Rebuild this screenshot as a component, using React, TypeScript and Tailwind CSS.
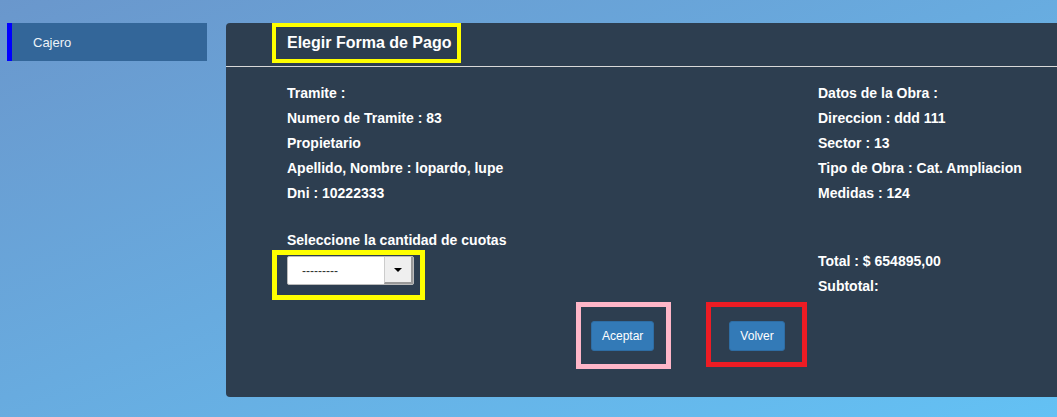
import React from "react";

const rowsLeft = [
  "Tramite :",
  "Numero de Tramite : 83",
  "Propietario",
  "Apellido, Nombre : lopardo, lupe",
  "Dni : 10222333",
];

const rowsRight = [
  "Datos de la Obra :",
  "Direccion : ddd 111",
  "Sector : 13",
  "Tipo de Obra : Cat. Ampliacion",
  "Medidas : 124",
];

export default function App() {
  return (
    <div
      className="h-[417px] w-full overflow-hidden bg-gradient-to-br from-[#6a97cc] to-[#63c1f4]"
      style={{ fontFamily: '"Liberation Sans", Arial, sans-serif' }}
    >
      <div className="flex items-start pt-[23px] pl-[7px] gap-[19px]">
        {/* sidebar */}
        <div className="w-[200px] h-[38px] shrink-0 flex items-center bg-[#336699] border-l-[5px] border-[#0000ff] pl-[21px] pt-[1px] text-[13px] text-[#eef3f8]">
          Cajero
        </div>

        {/* panel */}
        <div className="flex-1 h-[374px] bg-[#2d3e50] rounded-tl-[4px] rounded-bl-[4px] text-white">
          <div className="h-[44px] pl-[46px] border-b border-[#d8d8d8]">
            <div className="inline-flex items-center h-[40px] border-[4px] border-[#ffff00] pl-[11px] pr-[6px] text-[16px] font-bold">
              Elegir Forma de Pago
            </div>
          </div>

          <div className="grid grid-cols-[531px_1fr] pl-[61px] pt-[14px] text-[14px] font-bold">
            <div>
              {rowsLeft.map((r) => (
                <div key={r} className="leading-[25px]">
                  {r}
                </div>
              ))}
              <div className="mt-[24px] leading-[20px]">Seleccione la cantidad de cuotas</div>
              <div className="-ml-[15px] inline-block border-[5px] border-[#ffff00] pl-[10px] pr-[6px] pt-[1px] pb-[10px]">
                <div className="flex w-[127px] h-[29px] bg-white border border-[#bbb] rounded-[2px] font-normal">
                  <div className="flex-1 flex items-center pl-[14px] text-[12px] text-[#333]">---------</div>
                  <div className="w-[29px] flex items-center justify-center bg-[#efefef] border-l border-[#ccc] border-r-2 border-b-2 border-r-[#999] border-b-[#999]">
                    <div className="w-0 h-0 border-l-[4px] border-r-[4px] border-t-[4px] border-l-transparent border-r-transparent border-t-black" />
                  </div>
                </div>
              </div>
            </div>
            <div>
              {rowsRight.map((r) => (
                <div key={r} className="leading-[25px]">
                  {r}
                </div>
              ))}
              <div className="mt-[43px] leading-[25px]">Total : $ 654895,00</div>
              <div className="leading-[25px]">Subtotal:</div>
            </div>
          </div>

          <div className="flex items-start pl-[350px] mt-[2px] gap-[35px] text-[12px]">
            <div className="border-[5px] border-[#ffb6c8] pl-[10px] pr-[12px] pt-[14px] pb-[13px]">
              <button className="h-[30px] px-[10px] bg-[#337ab7] border border-[#2e6da4] rounded-[3px] text-white">
                Aceptar
              </button>
            </div>
            <div className="border-[5px] border-[#ed1c24] pl-[18px] pr-[17px] pt-[14px] pb-[11px]">
              <button className="h-[30px] px-[10px] bg-[#337ab7] border border-[#2e6da4] rounded-[3px] text-white">
                Volver
              </button>
            </div>
          </div>
        </div>
      </div>
    </div>
  );
}
